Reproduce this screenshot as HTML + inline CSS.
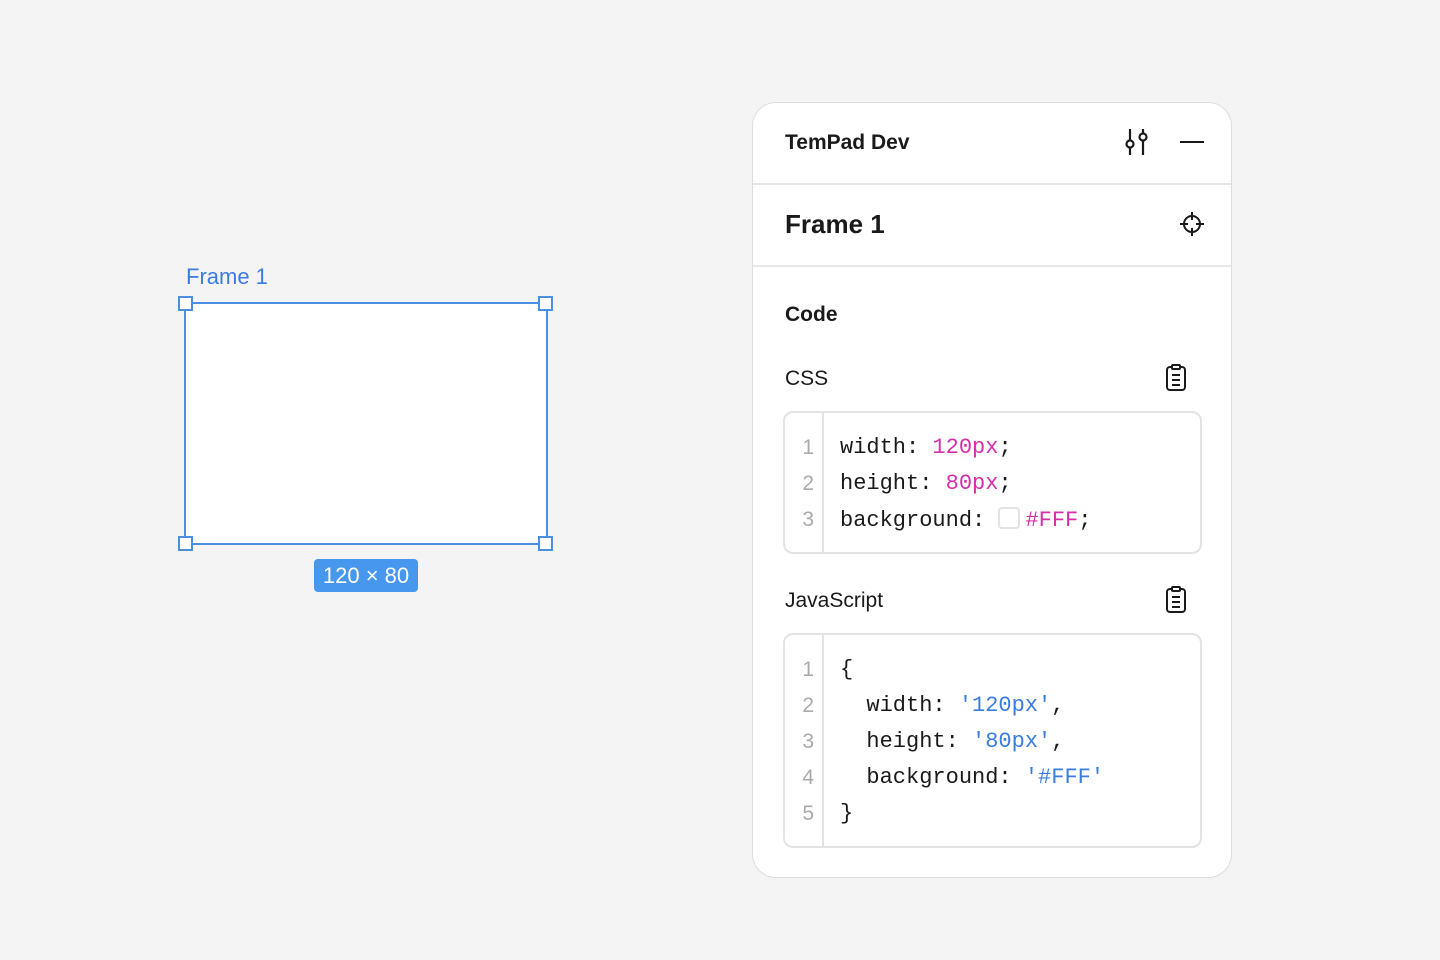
<!DOCTYPE html>
<html><head><meta charset="utf-8"><style>
*{box-sizing:border-box;margin:0;padding:0}
body{width:1440px;height:960px;background:#f4f4f4;font-family:"Liberation Sans",sans-serif;position:relative;overflow:hidden;color:#1a1a1a}
.abs{position:absolute}
.frame{left:184px;top:302px;width:364px;height:243px;background:#fff;border:2px solid #4a90e2}
.h{width:15px;height:15px;background:#fff;border:2px solid #4a90e2}
.panel{left:752px;top:102px;width:480px;height:776px;background:#fff;border:1px solid #ddd;border-radius:24px;overflow:hidden}
.code{left:30px;width:419px;border:2px solid #e3e3e3;border-radius:10px;font-family:"Liberation Mono",monospace;font-size:22px}
.gut{position:absolute;left:0;top:0;bottom:0;width:39px;border-right:2px solid #e3e3e3}
.ln{position:absolute;left:0;width:29px;text-align:right;color:#aaa;font-family:"Liberation Sans",sans-serif;font-size:21px}
.cl{position:absolute;left:55px;white-space:pre;color:#1a1a1a}
.p{color:#d62fa8}.b{color:#3b7ce0}
</style></head><body>
<div class="abs" style="left:186px;top:264px;color:#3b7ce0;font-size:22px">Frame 1</div>
<div class="abs frame"></div>
<div class="abs h" style="left:178px;top:296px"></div>
<div class="abs h" style="left:538px;top:296px"></div>
<div class="abs h" style="left:178px;top:536px"></div>
<div class="abs h" style="left:538px;top:536px"></div>
<div class="abs" style="left:314px;top:559px;width:104px;height:33px;background:#4797ee;border-radius:4px;color:#fff;font-size:22px;text-align:center;line-height:33px">120 × 80</div>

<div class="abs panel">
 <div class="abs" style="left:32px;top:28px;font-size:21px;font-weight:bold">TemPad Dev</div>
 <svg class="abs" style="left:368px;top:24px" width="30" height="32" viewBox="0 0 30 32" fill="none" stroke="#1a1a1a" stroke-width="2.2"><line x1="9" y1="2" x2="9" y2="13"/><circle cx="9" cy="17" r="3.5"/><line x1="9" y1="21" x2="9" y2="28"/><line x1="22" y1="2" x2="22" y2="6"/><circle cx="22" cy="10" r="3.5"/><line x1="22" y1="14" x2="22" y2="28"/></svg>
 <div class="abs" style="left:427px;top:38px;width:24px;height:2px;background:#1a1a1a"></div>
 <div class="abs" style="left:0;top:80px;width:480px;height:2px;background:#e6e6e6"></div>
 <div class="abs" style="left:32px;top:106px;font-size:26px;font-weight:bold">Frame 1</div>
 <svg class="abs" style="left:426px;top:108px" width="26" height="26" viewBox="0 0 26 26" fill="none" stroke="#1a1a1a" stroke-width="2"><circle cx="13" cy="13" r="8"/><line x1="13" y1="1" x2="13" y2="9"/><line x1="13" y1="17" x2="13" y2="25"/><line x1="1" y1="13" x2="9" y2="13"/><line x1="17" y1="13" x2="25" y2="13"/></svg>
 <div class="abs" style="left:0;top:162px;width:480px;height:2px;background:#e6e6e6"></div>
 <div class="abs" style="left:32px;top:200px;font-size:21px;font-weight:bold">Code</div>
 <div class="abs" style="left:32px;top:264px;font-size:21px">CSS</div>
 <svg class="abs" style="left:411px;top:261px" width="24" height="28" viewBox="0 0 24 28" fill="none" stroke="#1a1a1a" stroke-width="2"><rect x="3" y="3" width="18" height="23" rx="3"/><rect x="8" y="1" width="8" height="4" rx="1" fill="#fff"/><line x1="8" y1="11" x2="16" y2="11"/><line x1="8" y1="16" x2="16" y2="16"/><line x1="8" y1="21" x2="16" y2="21"/></svg>
 <div class="abs code" style="top:308px;height:143px">
  <div class="gut"></div>
  <div class="ln" style="top:23px">1</div><div class="ln" style="top:59px">2</div><div class="ln" style="top:95px">3</div>
  <div class="cl" style="top:22px">width: <span class="p">120px</span>;</div>
  <div class="cl" style="top:58px">height: <span class="p">80px</span>;</div>
  <div class="cl" style="top:94px">background: <span style="display:inline-block;width:22px;height:22px;border:2px solid #e3e3e3;border-radius:4px;vertical-align:-3px;margin-right:5px"></span><span class="p">#FFF</span>;</div>
 </div>
 <div class="abs" style="left:32px;top:486px;font-size:21px">JavaScript</div>
 <svg class="abs" style="left:411px;top:483px" width="24" height="28" viewBox="0 0 24 28" fill="none" stroke="#1a1a1a" stroke-width="2"><rect x="3" y="3" width="18" height="23" rx="3"/><rect x="8" y="1" width="8" height="4" rx="1" fill="#fff"/><line x1="8" y1="11" x2="16" y2="11"/><line x1="8" y1="16" x2="16" y2="16"/><line x1="8" y1="21" x2="16" y2="21"/></svg>
 <div class="abs code" style="top:530px;height:215px">
  <div class="gut"></div>
  <div class="ln" style="top:23px">1</div><div class="ln" style="top:59px">2</div><div class="ln" style="top:95px">3</div><div class="ln" style="top:131px">4</div><div class="ln" style="top:167px">5</div>
  <div class="cl" style="top:22px">{</div>
  <div class="cl" style="top:58px">  width: <span class="b">'120px'</span>,</div>
  <div class="cl" style="top:94px">  height: <span class="b">'80px'</span>,</div>
  <div class="cl" style="top:130px">  background: <span class="b">'#FFF'</span></div>
  <div class="cl" style="top:166px">}</div>
 </div>
</div>
</body></html>
